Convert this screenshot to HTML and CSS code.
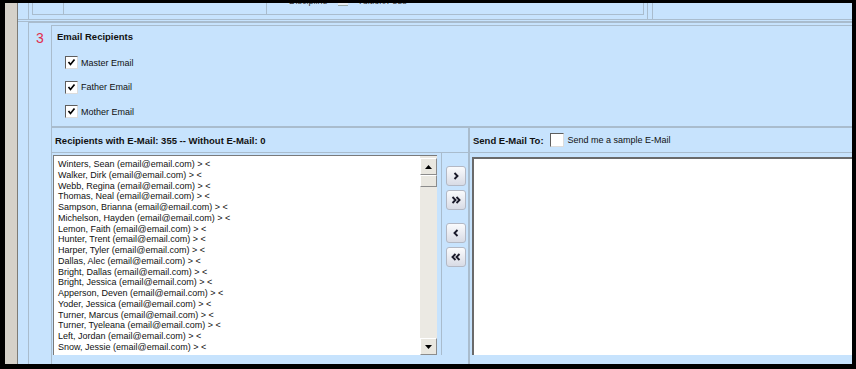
FILE: index.html
```html
<!DOCTYPE html>
<html lang="en">

<head>
    <meta charset="UTF-8">
    <title>Email Recipients</title>
    <link rel="stylesheet" href="styles.css">
</head>

<body>
    <div class="screen">
        <div class="gutter"></div>
        <div class="main">
            <div class="prev">
                <div class="prev-box">
                    <div class="prev-cell c1"></div>
                    <div class="prev-cell c2"></div>
                    <div class="prev-cell c3">
                        <span class="cut">Discipline</span>
                        <span class="radio"></span>
                        <span class="cut">Tuition/Fees</span>
                    </div>
                </div>
                <div class="prev-side"></div>
            </div>

            <div class="section">
                <div class="step">3</div>
                <div class="body">
                    <div class="options">
                        <div class="title">Email Recipients</div>
                        <label class="check"><span class="box"><svg viewBox="0 0 11 11"><path d="M2.5 5 L4.5 7.5 L8.5 2.5" /></svg></span>Master Email</label>
                        <label class="check"><span class="box"><svg viewBox="0 0 11 11"><path d="M2.5 5 L4.5 7.5 L8.5 2.5" /></svg></span>Father Email</label>
                        <label class="check"><span class="box"><svg viewBox="0 0 11 11"><path d="M2.5 5 L4.5 7.5 L8.5 2.5" /></svg></span>Mother Email</label>
                    </div>

                    <div class="lists">
                        <div class="left">
                            <div class="head">Recipients with E-Mail: 355 -- Without E-Mail: 0</div>
                            <div class="left-row">
                                <div class="listbox">
                                    <ul class="items">
                                        <li>Winters, Sean (email@email.com) &gt; &lt;</li>
                                        <li>Walker, Dirk (email@email.com) &gt; &lt;</li>
                                        <li>Webb, Regina (email@email.com) &gt; &lt;</li>
                                        <li>Thomas, Neal (email@email.com) &gt; &lt;</li>
                                        <li>Sampson, Brianna (email@email.com) &gt; &lt;</li>
                                        <li>Michelson, Hayden (email@email.com) &gt; &lt;</li>
                                        <li>Lemon, Faith (email@email.com) &gt; &lt;</li>
                                        <li>Hunter, Trent (email@email.com) &gt; &lt;</li>
                                        <li>Harper, Tyler (email@email.com) &gt; &lt;</li>
                                        <li>Dallas, Alec (email@email.com) &gt; &lt;</li>
                                        <li>Bright, Dallas (email@email.com) &gt; &lt;</li>
                                        <li>Bright, Jessica (email@email.com) &gt; &lt;</li>
                                        <li>Apperson, Deven (email@email.com) &gt; &lt;</li>
                                        <li>Yoder, Jessica (email@email.com) &gt; &lt;</li>
                                        <li>Turner, Marcus (email@email.com) &gt; &lt;</li>
                                        <li>Turner, Tyeleana (email@email.com) &gt; &lt;</li>
                                        <li>Left, Jordan (email@email.com) &gt; &lt;</li>
                                        <li>Snow, Jessie (email@email.com) &gt; &lt;</li>
                                    </ul>
                                    <div class="scrollbar">
                                        <div class="sb-btn"><svg viewBox="0 0 7 4"><path d="M0 4 L3.5 0 L7 4 Z" /></svg></div>
                                        <div class="sb-thumb"></div>
                                        <div class="sb-track"></div>
                                        <div class="sb-btn"><svg viewBox="0 0 7 4"><path d="M0 0 L3.5 4 L7 0 Z" /></svg></div>
                                    </div>
                                </div>

                                <div class="movers">
                                    <button class="mv"><svg viewBox="0 0 12 12"><path d="M4.5 3 L7.5 6 L4.5 9" /></svg></button>
                                    <button class="mv"><svg viewBox="0 0 12 12"><path d="M2.5 3 L5.5 6 L2.5 9 M6.5 3 L9.5 6 L6.5 9" /></svg></button>
                                    <button class="mv gap"><svg viewBox="0 0 12 12"><path d="M7.5 3 L4.5 6 L7.5 9" /></svg></button>
                                    <button class="mv"><svg viewBox="0 0 12 12"><path d="M5.5 3 L2.5 6 L5.5 9 M9.5 3 L6.5 6 L9.5 9" /></svg></button>
                                </div>
                            </div>
                        </div>

                        <div class="right">
                            <div class="head">Send E-Mail To:<span class="box"></span><span class="plain">Send me a sample E-Mail</span></div>
                            <div class="sendbox"></div>
                        </div>
                    </div>
                </div>
            </div>
        </div>
    </div>
</body>

</html>
```

FILE: styles.css
```css
body {
    margin: 0;
    background: #000;
    font-family: "Liberation Sans", Arial, sans-serif;
    font-size: 9px;
    color: #111;
}

.screen {
    display: flex;
    margin: 3px 4px 5px 5px;
    height: 361px;
    background: #c7e3fd;
    overflow: hidden;
}

.gutter {
    width: 12px;
    background: #d5d1c9;
    border-right: 1px solid #7d7b76;
}

.main {
    flex: 1;
    display: flex;
    flex-direction: column;
}

/* remains of the panel above */
.prev {
    display: flex;
    height: 16px;
    padding-left: 10px;
    border-bottom: 3px double #a9bccd;
}

.prev-box {
    display: flex;
    width: 612px;
    border-left: 1px solid #a9bccd;
    border-right: 1px solid #a9bccd;
    padding-left: 3px;
    padding-right: 3px;
}

.prev-cell {
    height: 11px;
    border-bottom: 1px solid #a9bccd;
    border-right: 1px solid #a9bccd;
}

.c1 {
    width: 30px;
    border-left: 1px solid #a9bccd;
}

.c2 {
    width: 202px;
}

.c3 {
    flex: 1;
    display: flex;
    gap: 10px;
    padding-left: 22px;
    overflow: hidden;
}

.cut {
    margin-top: -7px;
    color: #333;
}

.radio {
    width: 10px;
    height: 2px;
    background: #e8eef4;
    border-bottom: 1px solid #9aa;
}

.prev-side {
    flex: 1;
    border-left: 1px solid #a9bccd;
    margin-left: 4px;
}

/* section 3 */
.section {
    flex: 1;
    display: flex;
    margin-left: 10px;
    border-top: 1px solid #a9bccd;
    border-left: 1px solid #a9bccd;
    padding-top: 2px;
}

.step {
    width: 23px;
    border-right: 1px solid #a9bccd;
    color: #e0304e;
    font-size: 14px;
    padding: 5px 0 0 7px;
    box-sizing: border-box;
}

.body {
    flex: 1;
    display: flex;
    flex-direction: column;
    border-top: 1px solid #a9bccd;
}

.options {
    height: 100px;
    padding: 5px 0 0 5px;
    box-sizing: border-box;
}

.title {
    font-weight: bold;
    font-size: 9.5px;
    height: 11px;
    margin-bottom: 14px;
}

.check {
    display: flex;
    align-items: center;
    gap: 3px;
    height: 13px;
    margin: 0 0 11.5px 8px;
}

.box {
    display: block;
    width: 11px;
    height: 11px;
    background: #fff;
    border-top: 1px solid #5e5e5e;
    border-left: 1px solid #5e5e5e;
    border-right: 1px solid #dcdcdc;
    border-bottom: 1px solid #dcdcdc;
}

.box svg {
    width: 11px;
    height: 11px;
    display: block;
}

.box path {
    fill: none;
    stroke: #000;
    stroke-width: 1.7;
}

.lists {
    flex: 1;
    display: flex;
    border-top: 2px solid #a9bccd;
}

.head {
    height: 24px;
    display: flex;
    align-items: center;
    font-weight: bold;
    font-size: 9.5px;
    padding-left: 3px;
    border-bottom: 1px solid #a9bccd;
    white-space: nowrap;
}

.left {
    width: 418px;
    display: flex;
    flex-direction: column;
    border-right: 2px solid #a9bccd;
    box-sizing: border-box;
}

.left-row {
    flex: 1;
    display: flex;
    padding-bottom: 9px;
}

.listbox {
    width: 383px;
    display: flex;
    margin: 2px 0 0 1px;
    background: #fff;
    border-top: 1px solid #7a7a7a;
    border-left: 1px solid #7a7a7a;
}

.items {
    flex: 1;
    list-style: none;
    margin: 0;
    padding: 3px 0 0 4px;
}

.items li {
    height: 10.76px;
    line-height: 10.76px;
    white-space: nowrap;
}

.scrollbar {
    width: 17px;
    display: flex;
    flex-direction: column;
    background: #ebe9e3;
    padding-top: 2px;
}

.sb-btn {
    height: 15px;
    display: flex;
    align-items: center;
    justify-content: center;
    background: #e9e7e0;
    border: 1px solid #fff;
    border-right-color: #8c8c8c;
    border-bottom-color: #8c8c8c;
}

.sb-btn svg {
    width: 7px;
    height: 4px;
}

.sb-thumb {
    height: 10px;
    background: #e9e7e0;
    border: 1px solid #fff;
    border-right-color: #8c8c8c;
    border-bottom-color: #8c8c8c;
}

.sb-track {
    flex: 1;
}

.movers {
    width: 25px;
    display: flex;
    flex-direction: column;
    padding: 13px 0 0 4px;
    margin-left: 4px;
    border-left: 1px solid #a9bccd;
    box-sizing: border-box;
}

.mv {
    width: 20px;
    height: 20px;
    padding: 0;
    margin-bottom: 4px;
    border: 1px solid #b3b8c4;
    border-radius: 3px;
    background: linear-gradient(#fafbfd, #d8dbe5);
    display: flex;
    align-items: center;
    justify-content: center;
}

.mv.gap {
    margin-top: 9px;
}

.mv svg {
    width: 12px;
    height: 12px;
}

.mv path {
    fill: none;
    stroke: #1a1a2a;
    stroke-width: 1.9;
}

.right {
    flex: 1;
    display: flex;
    flex-direction: column;
}

.right .head .box {
    width: 12px;
    height: 12px;
    margin: 0 4px 0 6px;
}

.plain {
    font-weight: normal;
    font-size: 9px;
}

.sendbox {
    flex: 1;
    margin: 4px 0 9px 2px;
    background: #fff;
    border-top: 2px solid #6a6a6a;
    border-left: 2px solid #6a6a6a;
}
```
